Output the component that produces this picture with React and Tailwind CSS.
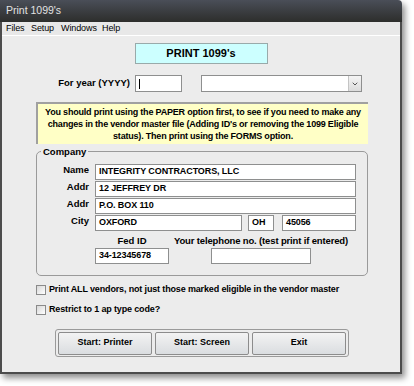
import { ChevronDown } from 'lucide-react'

const font = { fontFamily: '"Liberation Sans", Arial, sans-serif' }

function Field({ value = '', className = '' }) {
  return (
    <div className={`flex h-[16px] items-center border border-[#8e8f8f] bg-white px-[3px] text-[9px] font-bold tracking-[-0.1px] text-black ${className}`}>
      {value}
    </div>
  )
}

function Row({ label, children }) {
  return (
    <div className="flex items-start">
      <div className="w-[53px] pr-[6px] text-right text-[9.5px] font-bold leading-[12px]">{label}</div>
      {children}
    </div>
  )
}

function Check({ label }) {
  return (
    <div className="flex h-[12px] items-center gap-[3px]">
      <div className="h-[10px] w-[10px] border border-[#8a8a8a] bg-gradient-to-br from-[#d8d8d8] to-white" />
      <span className="text-[9px] font-bold tracking-[-0.15px]">{label}</span>
    </div>
  )
}

export default function App() {
  return (
    <div className="h-[386px] w-[414px] bg-white" style={font}>
      <div className="flex h-[374px] w-[402px] flex-col overflow-hidden rounded-tr-[4px] shadow-[3px_4px_6px_rgba(0,0,0,0.45)]">
        <div className="flex h-[22px] items-center bg-gradient-to-b from-[#4a4e58] to-[#2d2e2c] px-[6px] text-[10.5px] text-[#e2e2e2]">
          Print 1099's
        </div>
        <div className="flex flex-1 flex-col border-x-2 border-b-2 border-[#4c4c4c] bg-[#ececec] text-black">
          <div className="flex h-[14px] items-center border-b border-white bg-[#e8e8e8] pl-[4px] text-[9px] tracking-[-0.1px]">
            <span className="w-[25px]">Files</span>
            <span className="w-[30px]">Setup</span>
            <span className="w-[41px]">Windows</span>
            <span>Help</span>
          </div>

          <div className="mx-auto mt-[7px] flex h-[21px] w-[133px] items-center justify-center border border-[#9aa] bg-[#ccffff] text-[11px] font-bold">
            PRINT 1099's
          </div>

          <div className="mt-[11px] flex items-center">
            <div className="w-[133px] pr-[5px] text-right text-[9.5px] font-bold">For year (YYYY)</div>
            <div className="flex h-[17px] w-[47px] items-center border border-[#8e8f8f] bg-white px-[3px]">
              <div className="h-[10px] w-px bg-black" />
            </div>
            <div className="ml-[19px] flex h-[17px] w-[161px] items-center justify-end border border-[#8e8f8f] bg-white">
              <div className="flex h-full w-[13px] items-center justify-center border-l border-[#c4c4c4] bg-gradient-to-b from-[#f4f4f4] to-[#dcdcdc]">
                <ChevronDown size={8} strokeWidth={3} className="text-[#555]" />
              </div>
            </div>
          </div>

          <div className="ml-[34px] mt-[10px] flex h-[42px] w-[332px] flex-col items-center justify-center border-l-2 border-t-2 border-[#a0a0a0] bg-[#ffffc6] text-center text-[9px] font-bold leading-[12px] tracking-[-0.2px]">
            <div>You should print using the PAPER option first, to see if you need to make any</div>
            <div>changes in the vendor master file (Adding ID's or removing the 1099 Eligible</div>
            <div>status). Then print using the FORMS option.</div>
          </div>

          <div className="relative ml-[34px] mt-[7px] h-[125px] w-[332px] rounded-[5px] border border-[#9a9a9a] pl-[5px] pt-[12px]">
            <span className="absolute -top-[7px] left-[4px] bg-[#ececec] px-[2px] text-[9.5px] font-bold">Company</span>
            <div className="flex flex-col gap-[1px]">
              <Row label="Name"><Field value="INTEGRITY CONTRACTORS, LLC" className="w-[261px]" /></Row>
              <Row label="Addr"><Field value="12 JEFFREY DR" className="w-[261px]" /></Row>
              <Row label="Addr"><Field value="P.O. BOX 110" className="w-[261px]" /></Row>
              <Row label="City">
                <Field value="OXFORD" className="w-[147px]" />
                <Field value="OH" className="ml-[6px] w-[26px]" />
                <Field value="45056" className="ml-[8px] w-[74px]" />
              </Row>
            </div>
            <div className="mt-[3px] flex">
              <div className="ml-[53px] flex w-[74px] flex-col items-center">
                <span className="text-[9.5px] font-bold leading-[14px]">Fed ID</span>
                <Field value="34-12345678" className="w-[74px]" />
              </div>
              <div className="ml-[6px] flex w-[172px] flex-col items-center">
                <span className="whitespace-nowrap text-[9.5px] font-bold leading-[14px] tracking-[-0.15px]">Your telephone no. (test print if entered)</span>
                <Field className="w-[100px]" />
              </div>
            </div>
          </div>

          <div className="ml-[34px] mt-[8px] flex flex-col gap-[8px]">
            <Check label="Print ALL vendors, not just those marked eligible in the vendor master" />
            <Check label="Restrict to 1 ap type code?" />
          </div>

          <div className="ml-[53px] mt-[13px] flex h-[28px] w-[294px] items-center gap-[3px] rounded-[3px] border border-[#9a9a9a] px-[2px]">
            {['Start: Printer', 'Start: Screen', 'Exit'].map((b) => (
              <div key={b} className="flex h-[23px] flex-1 items-center justify-center rounded-[2px] border border-[#8c8c8c] bg-gradient-to-b from-[#f3f3f3] to-[#dadde0] text-[9px] font-bold">
                {b}
              </div>
            ))}
          </div>
        </div>
      </div>
    </div>
  )
}
